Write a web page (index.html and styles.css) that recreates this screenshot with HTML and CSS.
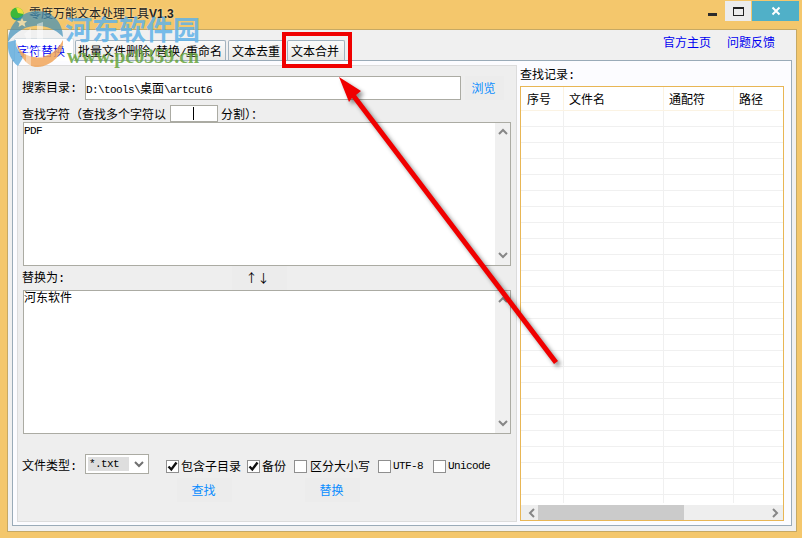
FILE: index.html
```html
<!DOCTYPE html>
<html lang="en">
<head>
    <meta charset="UTF-8">
    <title>零度万能文本处理工具V1.3</title>
    <link rel="stylesheet" href="styles.css">
</head>
<body>
<div class="window">
    <div class="titlebar">
        <svg class="app-icon" width="14" height="14" viewBox="0 0 14 14">
            <circle cx="7" cy="7" r="6.5" fill="#3cb83a"/>
            <path d="M6 0.5 A6.5 6.5 0 0 1 13.5 7 L8 6 Z" fill="#e8e23c"/>
            <path d="M1 9 C4 12 8 12 12 10 A6.5 6.5 0 0 1 1 9 Z" fill="#1e7fb8"/>
        </svg>
        <div class="title">零度万能文本处理工具<b>V1.3</b></div>
        <div class="win-btn win-min"><span class="min-glyph"></span></div>
        <div class="win-btn win-max"><span class="max-glyph"></span></div>
        <div class="win-btn win-close">
            <svg width="10" height="10" viewBox="0 0 10 10"><path d="M1.5 1.5 L8.5 8.5 M8.5 1.5 L1.5 8.5" stroke="#fff" stroke-width="2"/></svg>
        </div>
    </div>

    <div class="client">
        <div class="topbar">
            <div class="tabs">
                <div class="tab tab-active">字符替换</div>
                <div class="tab tab-wide">批量文件删除<span class="lat">/</span>替换<span class="lat">/</span>重命名</div>
                <div class="tab tab-short">文本去重</div>
                <div class="tab">文本合并</div>
            </div>
            <div class="links">
                <a href="#">官方主页</a>
                <a href="#">问题反馈</a>
            </div>
        </div>

        <div class="panel">
            <div class="page">
                <div class="row row-search">
                    <span class="field-label">搜索目录<span class="colon">:</span></span>
                    <div class="field field-path"><span class="lat">D:\tools\</span>桌面<span class="lat">\artcut6</span></div>
                    <div class="btn btn-browse">浏览</div>
                </div>
                <div class="row row-find">
                    <span class="find-label">查找字符（查找多个字符以</span>
                    <div class="field field-sep"><span class="caret"></span></div>
                    <span>分割）：</span>
                </div>
                <div class="textbox">
                    <div class="textbox-text"><span class="lat">PDF</span></div>
                    <div class="vscroll">
                        <svg class="chev" width="10" height="7" viewBox="0 0 10 7"><path d="M1 6 L5 2 L9 6" fill="none" stroke="#868686" stroke-width="2"/></svg>
                        <svg class="chev" width="10" height="7" viewBox="0 0 10 7"><path d="M1 1 L5 5 L9 1" fill="none" stroke="#868686" stroke-width="2"/></svg>
                    </div>
                </div>
                <div class="row row-swap">
                    <span class="swap-label">替换为<span class="colon">:</span></span>
                    <div class="btn btn-swap">↑↓</div>
                </div>
                <div class="textbox">
                    <div class="textbox-text">河东软件</div>
                    <div class="vscroll">
                        <svg class="chev" width="10" height="7" viewBox="0 0 10 7"><path d="M1 6 L5 2 L9 6" fill="none" stroke="#868686" stroke-width="2"/></svg>
                        <svg class="chev" width="10" height="7" viewBox="0 0 10 7"><path d="M1 1 L5 5 L9 1" fill="none" stroke="#868686" stroke-width="2"/></svg>
                    </div>
                </div>
                <div class="row row-options">
                    <span class="field-label option-label">文件类型<span class="colon">:</span></span>
                    <div class="select">
                        <span class="select-value lat">*.txt</span>
                        <svg width="10" height="7" viewBox="0 0 10 7"><path d="M1 1 L5 5 L9 1" fill="none" stroke="#707070" stroke-width="2"/></svg>
                    </div>
                    <div class="checks">
                        <div class="check">
                            <span class="checkbox"><svg width="11" height="11" viewBox="0 0 11 11"><path d="M1.5 5.5 L4.3 8.5 L9.5 1.5" fill="none" stroke="#111" stroke-width="2.4"/></svg></span>包含子目录
                        </div>
                        <div class="check">
                            <span class="checkbox"><svg width="11" height="11" viewBox="0 0 11 11"><path d="M1.5 5.5 L4.3 8.5 L9.5 1.5" fill="none" stroke="#111" stroke-width="2.4"/></svg></span>备份
                        </div>
                        <div class="check"><span class="checkbox"></span><span class="pad-1">区分大小写</span></div>
                        <div class="check"><span class="checkbox"></span><span class="lat">UTF-8</span></div>
                        <div class="check"><span class="checkbox"></span><span class="lat">Unicode</span></div>
                    </div>
                </div>
                <div class="row row-actions">
                    <div class="btn btn-action">查找</div>
                    <div class="btn btn-action">替换</div>
                </div>
            </div>

            <div class="records">
                <div class="records-title">查找记录<span class="colon">:</span></div>
                <div class="grid">
                    <div class="grid-head">
                        <div class="cell">序号</div>
                        <div class="cell">文件名</div>
                        <div class="cell">通配符</div>
                        <div class="cell">路径</div>
                    </div>
                    <div class="grid-body">
                        <div class="col"></div>
                        <div class="col"></div>
                        <div class="col"></div>
                        <div class="col"></div>
                    </div>
                    <div class="hscroll">
                        <svg class="hscroll-left" width="7" height="10" viewBox="0 0 7 10"><path d="M6 1 L2 5 L6 9" fill="none" stroke="#868686" stroke-width="2"/></svg>
                        <div class="thumb"></div>
                        <svg class="hscroll-right" width="7" height="10" viewBox="0 0 7 10"><path d="M1 1 L5 5 L1 9" fill="none" stroke="#868686" stroke-width="2"/></svg>
                    </div>
                </div>
            </div>
        </div>
    </div>

    <!-- site watermark -->
    <svg class="wm-logo" width="66" height="70" viewBox="0 0 66 70">
        <path d="M4 38 C4 20 18 7 33 7 C49 7 59 19 59 33 C50 24 40 21 30 22 C18 23 10 30 4 38 Z" fill="#3f8fb8" opacity="0.7"/>
        <path d="M4 38 C3 48 7 57 14 62 L20 52 C14 47 11 42 12 36 Z" fill="#5aa9dc" opacity="0.8"/>
        <path d="M12 38 C16 50 26 54 36 53 C46 52 54 46 59 36 C60 50 48 62 34 63 C24 64 15 52 12 38 Z" fill="#f0a55a" opacity="0.85"/>
        <path d="M33 20 L39 18 L39 54 L33 54 Z" fill="#fff" opacity="0.45"/>
        <path d="M20 30 L27 24 L27 62 L22 60 L22 34 Z" fill="#fff" opacity="0.4"/>
        <path d="M18 14 L19.5 17 L23 17 L20.5 19.5 L21.5 23 L18 21 L14.5 23 L15.5 19.5 L13 17 L16.5 17 Z" fill="#e8d9a8"/>
    </svg>
    <div class="wm-name">河东软件园</div>
    <div class="wm-url">www.pc0359.cn</div>

    <!-- annotation drawn over the screenshot -->
    <div class="mark-box"></div>
    <svg class="mark-arrow" width="802" height="538" viewBox="0 0 802 538">
        <path d="M339 77 L361 91 L356 95 L558 361 L554 364 L352 98 L349 102 Z" fill="#f00000"/>
    </svg>
</div>
</body>
</html>
```
FILE: styles.css
```css
* {
    box-sizing: border-box;
}
body {
    margin: 0;
    font-family: "Noto Sans CJK SC", "Liberation Sans", sans-serif;
    font-size: 12px;
    line-height: 16px;
    color: #000;
}
.window {
    position: relative;
    width: 802px;
    height: 538px;
    overflow: hidden;
    background: #f4c76c;
    display: flex;
    flex-direction: column;
    padding: 0 5px 6px 7px;
}
.lat, .colon {
    font-family: "Liberation Mono", monospace;
}
.lat {
    font-size: 11px;
    letter-spacing: -0.6px;
}

/* title bar */
.titlebar {
    height: 29px;
    display: flex;
    align-items: flex-start;
    flex-shrink: 0;
}
.app-icon {
    margin: 7px 0 0 3px;
}
.title {
    margin: 5px 0 0 5px;
    font-size: 12px;
    color: #222;
    text-shadow: 0 0 3px rgba(255, 255, 255, 0.6);
    flex: 1;
}
.title b {
    font-family: "Liberation Sans", sans-serif;
}
.win-btn {
    height: 20px;
    margin-top: 1px;
    display: flex;
    align-items: center;
    justify-content: center;
}
.win-min {
    width: 25px;
}
.min-glyph {
    width: 9px;
    height: 3px;
    margin-top: 6px;
    background: #2b2b2b;
}
.win-max {
    width: 26px;
    background: #ececec;
    margin-right: 1px;
}
.max-glyph {
    width: 11px;
    height: 9px;
    border: 1px solid #222;
    border-top-width: 2px;
}
.win-close {
    width: 47px;
    margin-right: -2px;
    background: #50b0c8;
}

/* client area */
.client {
    flex: 1;
    display: flex;
    flex-direction: column;
    min-height: 0;
    background: #f0f0f0;
    border: 1px solid #c6a964;
    padding: 0 4px 5px;
}
.topbar {
    height: 30px;
    flex-shrink: 0;
    display: flex;
    justify-content: space-between;
    align-items: flex-end;
    padding-right: 17px;
}
.tabs {
    display: flex;
    align-items: flex-end;
    gap: 2px;
    padding-left: 2px;
}
.tab {
    height: 20px;
    padding: 0 5px 0 3px;
    line-height: 20px;
    border: 1px solid #a2b3bf;
    border-bottom: none;
    border-radius: 2px 2px 0 0;
    background: linear-gradient(#fafafa, #e9e9e6);
    white-space: nowrap;
}
.tab-active {
    position: relative;
    top: 1px;
    height: 23px;
    width: 60px;
    margin-right: -1px;
    padding: 0 0 0 2px;
    line-height: 24px;
    color: #0000f0;
    background: #fff;
    border-color: #d5dde2;
}
.tab-wide {
    padding: 0 3px 0 2px;
}
.tab-short {
    padding-right: 4px;
}
.links {
    display: flex;
    gap: 16px;
    padding-bottom: 10px;
}
.links a {
    color: #0000f0;
    text-decoration: none;
}

/* tab panel */
.panel {
    flex: 1;
    min-height: 0;
    display: flex;
    background: #fcfcff;
    border: 1px solid #9aabb8;
    padding: 4px 0 3px 4px;
}
.page {
    width: 500px;
    flex-shrink: 0;
    background: #eeeeee;
    border: 1px solid #dcdcdc;
    padding-left: 5px;
}
.row {
    display: flex;
    align-items: center;
}
.field-label {
    width: 63px;
    margin-left: -1px;
    flex-shrink: 0;
}
.field {
    background: #fff;
    border: 1px solid #ababa3;
}
.btn {
    display: flex;
    align-items: center;
    justify-content: center;
    padding-right: 2px;
    background: #ececec;
    color: #0a8cff;
}

.row-search {
    margin-top: 10px;
    height: 24px;
}
.field-path {
    width: 376px;
    height: 24px;
    line-height: 22px;
}
.btn-browse {
    width: 39px;
    height: 24px;
    margin-left: 4px;
}
.row-find {
    margin-top: 5px;
    height: 17px;
}
.find-label {
    margin-left: -1px;
    width: 145px;
}
.field-sep {
    width: 48px;
    height: 17px;
    margin: 0 3px;
    position: relative;
}
.caret {
    position: absolute;
    left: 22px;
    top: 1px;
    width: 1px;
    height: 13px;
    background: #000;
}
.textbox {
    width: 488px;
    height: 144px;
    display: flex;
    background: #fff;
    border: 1px solid #ababa3;
}
.textbox-text {
    flex: 1;
    padding: 0;
    line-height: 12px;
}
.vscroll {
    width: 15px;
    background: #f0f0f0;
    display: flex;
    flex-direction: column;
    justify-content: space-between;
    align-items: center;
    padding: 5px 0 6px;
}
.row-swap {
    height: 24px;
}
.swap-label {
    width: 210px;
    margin-left: -1px;
}
.btn-swap {
    width: 55px;
    height: 24px;
    padding-right: 4px;
    color: #000;
}
.row-options {
    margin-top: 20px;
    height: 20px;
}
.option-label {
    margin-top: 4px;
}
.select {
    width: 64px;
    height: 20px;
    display: flex;
    align-items: center;
    justify-content: space-between;
    padding: 0 4px 0 2px;
    background: #fff;
    border: 1px solid #ababa3;
}
.select-value {
    width: 41px;
    height: 14px;
    padding-left: 1px;
    line-height: 15px;
    background: #dedede;
}
.checks {
    display: grid;
    grid-template-columns: 81px 47px 84px 55px auto;
    margin: 4px 0 0 17px;
}
.check {
    display: flex;
    align-items: center;
    gap: 2px;
    white-space: nowrap;
}
.checkbox {
    width: 13px;
    height: 13px;
    flex-shrink: 0;
    display: flex;
    align-items: center;
    justify-content: center;
    background: #fff;
    border: 1px solid #8f8f8f;
}
.pad-1 {
    padding-left: 1px;
}
.row-actions {
    margin-top: 4px;
    padding-left: 154px;
    gap: 73px;
}
.btn-action {
    width: 55px;
    height: 24px;
}

/* records list */
.records {
    flex: 1;
    min-width: 0;
    display: flex;
    flex-direction: column;
    padding: 1px 7px 1px 3px;
}
.records-title {
    height: 16px;
    margin-bottom: 4px;
}
.grid {
    flex: 1;
    min-height: 0;
    display: flex;
    flex-direction: column;
    background: #fff;
    border: 1px solid #e8b655;
}
.grid-head, .grid-body {
    display: grid;
    grid-template-columns: 43px 100px 70px 1fr;
}
.grid-head {
    height: 24px;
    border-bottom: 1px solid #fbf3e3;
}
.cell {
    padding-left: 5px;
    line-height: 24px;
    border-right: 1px solid #fbf3e3;
}
.cell:first-child {
    padding-left: 6px;
}
.cell:last-child, .col:last-child {
    border-right: none;
}
.grid-body {
    flex: 1;
    min-height: 0;
    background: repeating-linear-gradient(to bottom, transparent 0, transparent 15px, #f0f0f0 15px, #f0f0f0 16px);
}
.col {
    border-right: 1px solid #f0f0f0;
}
.hscroll {
    height: 15px;
    margin-top: 2px;
    flex-shrink: 0;
    display: flex;
    align-items: center;
    background: #eeeeee;
}
.hscroll-left {
    margin: 0 3px 0 7px;
}
.thumb {
    width: 146px;
    height: 15px;
    background: #cbcbcb;
}
.hscroll-right {
    margin-left: auto;
    margin-right: 4px;
}

/* watermark and annotation sit over the window */
.wm-logo {
    position: absolute;
    left: 4px;
    top: 4px;
}
.wm-name {
    position: absolute;
    left: 65px;
    top: 11px;
    font-size: 27px;
    line-height: 36px;
    font-weight: 700;
    color: rgba(96, 178, 232, 0.85);
    white-space: nowrap;
}
.wm-url {
    position: absolute;
    left: 67px;
    top: 45px;
    font-family: "Liberation Serif", serif;
    font-size: 20px;
    line-height: 22px;
    font-weight: 700;
    color: rgba(104, 165, 60, 0.85);
    white-space: nowrap;
}
.mark-box {
    position: absolute;
    left: 282px;
    top: 32px;
    width: 70px;
    height: 36px;
    border: 4px solid #f00000;
}
.mark-arrow {
    position: absolute;
    left: 0;
    top: 0;
    filter: drop-shadow(3px 3px 2px rgba(0, 0, 0, 0.45));
}
```
